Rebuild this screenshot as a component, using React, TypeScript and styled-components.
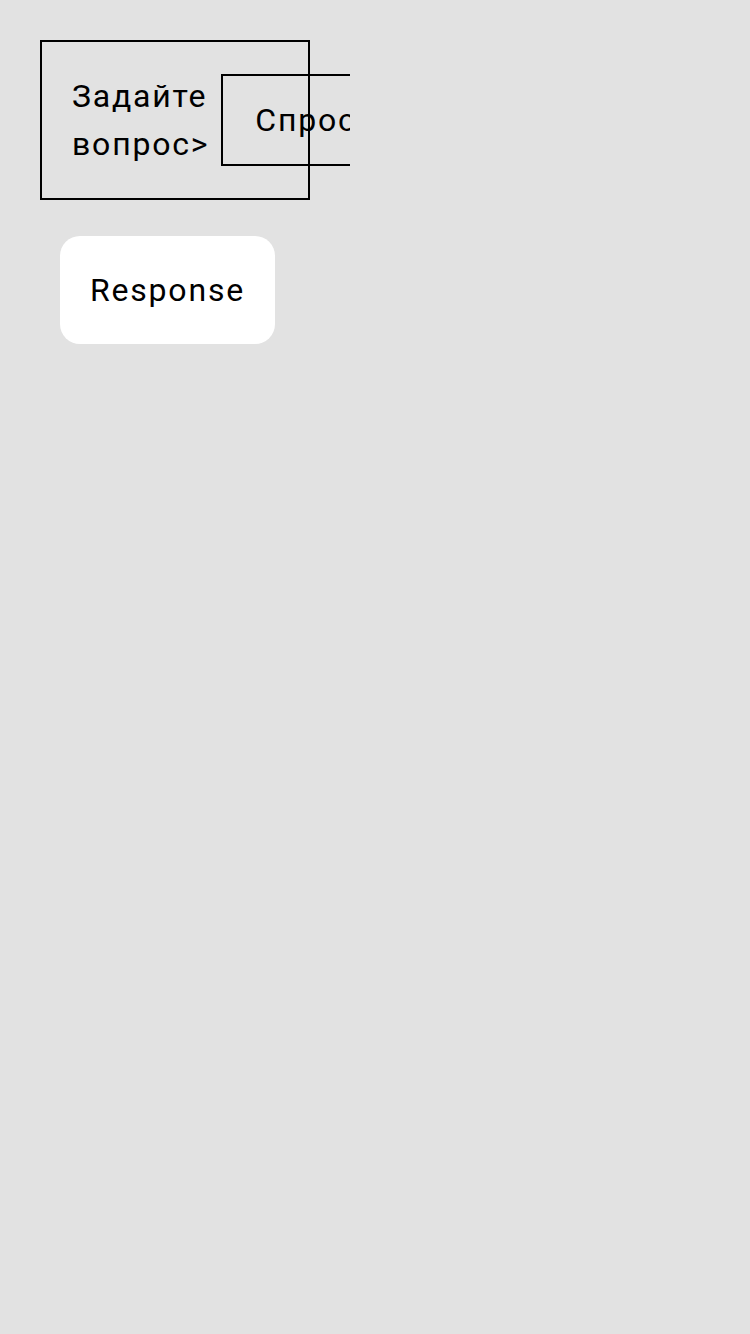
import React from "react";
import styled, { createGlobalStyle } from "styled-components";

const Global = createGlobalStyle`
  html, body {
    margin: 0;
    padding: 0;
    background: #e2e2e2;
  }
  body {
    font-family: Roboto, "Noto Sans", sans-serif;
    color: #000;
  }
`;

const Page = styled.div`
  width: 350px;
  box-sizing: border-box;
  padding: 40px;
  overflow: hidden;
`;

const AskForm = styled.form`
  display: flex;
  align-items: center;
  box-sizing: border-box;
  width: 270px;
  height: 160px;
  padding: 0 30px;
  margin: 0;
  border: 2px solid #000;
`;

const Label = styled.label`
  flex: 0 1 auto;
  font-size: 32px;
  line-height: 48px;
  letter-spacing: 1.8px;
`;

const AskButton = styled.button`
  flex: 0 0 auto;
  margin-left: 12px;
  box-sizing: border-box;
  height: 92px;
  padding: 0 32px;
  border: 2px solid #000;
  background: transparent;
  font-family: Roboto, "Noto Sans", sans-serif;
  font-size: 32px;
  letter-spacing: 1.8px;
  color: #000;
  white-space: nowrap;
`;

const ResponseCard = styled.div`
  width: fit-content;
  margin: 36px 0 0 20px;
  padding: 30px;
  background: #fff;
  border-radius: 20px;
  font-size: 32px;
  line-height: 48px;
  letter-spacing: 1.8px;
`;

export default function App() {
  return (
    <>
      <Global />
      <Page>
        <AskForm onSubmit={(e) => e.preventDefault()}>
          <Label>Задайте вопрос&gt;</Label>
          <AskButton type="submit">Спросить</AskButton>
        </AskForm>
        <ResponseCard>Response</ResponseCard>
      </Page>
    </>
  );
}
